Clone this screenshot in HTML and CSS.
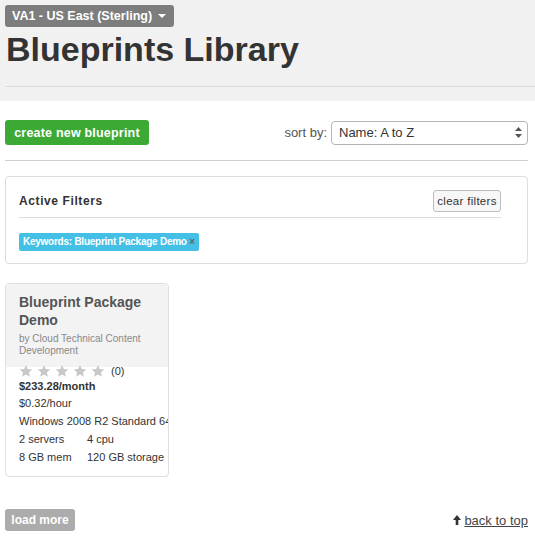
FILE: index.html
```html
<!DOCTYPE html>
<html>
<head>
<meta charset="utf-8">
<link rel="stylesheet" href="styles.css">
</head>
<body>
<header class="head">
  <div class="region">VA1 - US East (Sterling) <span class="caret"></span></div>
  <h1 class="title">Blueprints Library</h1>
  <div class="head-rule"></div>
</header>
<main class="page">
  <div class="toolbar">
    <button class="btn-create">create new blueprint</button>
    <label class="sort">sort by:
      <span class="select">Name: A to Z
        <svg class="updown" width="7" height="11" viewBox="0 0 7 11"><path d="M3.5 0 L7 4 H0 Z M3.5 11 L7 7 H0 Z" fill="#555"/></svg>
      </span>
    </label>
  </div>
  <div class="rule"></div>
  <section class="filters">
    <div class="filters-head">
      <h2 class="filters-title">Active Filters</h2>
      <button class="btn-clear">clear filters</button>
    </div>
    <div class="filters-body">
      <span class="tag">Keywords: Blueprint Package Demo <span class="tag-x">×</span></span>
    </div>
  </section>
  <div class="cards">
    <article class="card">
      <div class="card-top">
        <h3 class="card-title">Blueprint Package Demo</h3>
        <div class="card-by">by Cloud Technical Content Development</div>
      </div>
      <div class="card-body">
        <div class="stars">
          <svg class="star" viewBox="0 0 24 24"><path d="M12 1.5l3.1 7.1 7.7.7-5.8 5.1 1.7 7.6L12 18l-6.7 4 1.7-7.6-5.8-5.1 7.7-.7z"/></svg>
          <svg class="star" viewBox="0 0 24 24"><path d="M12 1.5l3.1 7.1 7.7.7-5.8 5.1 1.7 7.6L12 18l-6.7 4 1.7-7.6-5.8-5.1 7.7-.7z"/></svg>
          <svg class="star" viewBox="0 0 24 24"><path d="M12 1.5l3.1 7.1 7.7.7-5.8 5.1 1.7 7.6L12 18l-6.7 4 1.7-7.6-5.8-5.1 7.7-.7z"/></svg>
          <svg class="star" viewBox="0 0 24 24"><path d="M12 1.5l3.1 7.1 7.7.7-5.8 5.1 1.7 7.6L12 18l-6.7 4 1.7-7.6-5.8-5.1 7.7-.7z"/></svg>
          <svg class="star" viewBox="0 0 24 24"><path d="M12 1.5l3.1 7.1 7.7.7-5.8 5.1 1.7 7.6L12 18l-6.7 4 1.7-7.6-5.8-5.1 7.7-.7z"/></svg>
          <em>(0)</em>
        </div>
        <div class="price">$233.28/month</div>
        <div class="line">$0.32/hour</div>
        <div class="line nowrap">Windows 2008 R2 Standard 64-bit</div>
        <div class="line pair"><span>2 servers</span><span>4 cpu</span></div>
        <div class="line pair"><span>8 GB mem</span><span>120 GB storage</span></div>
      </div>
    </article>
  </div>
  <div class="footer">
    <button class="btn-more">load more</button>
    <a class="top" href="#"><svg width="8" height="10" viewBox="0 0 8 10"><path d="M4 0 L8 5 H5.3 V10 H2.7 V5 H0 Z" fill="#333"/></svg> <u>back to top</u></a>
  </div>
</main>
</body>
</html>
```
FILE: styles.css
```css
* { box-sizing: border-box; }
body {
  margin: 0;
  font-family: "Liberation Sans", Arial, sans-serif;
  color: #333;
  background: #fff;
}
.head {
  background: #f1f1f1;
  padding: 5px 0 0 5px;
  height: 101px;
}
.region {
  display: inline-flex;
  align-items: center;
  gap: 6px;
  height: 22px;
  padding: 0 8px 0 7px;
  background: #7d7d7d;
  color: #fff;
  font-weight: bold;
  font-size: 12.5px;
  white-space: nowrap;
  border-radius: 3px;
}
.caret {
  width: 0; height: 0;
  border-left: 4px solid transparent;
  border-right: 4px solid transparent;
  border-top: 4px solid #fff;
}
.title {
  margin: 3px 0 0 1px;
  font-size: 34px;
  line-height: 38px;
  font-weight: bold;
  color: #333;
}
.head-rule {
  margin-top: 18px;
  border-top: 1px solid #dcdcdc;
}
.page {
  padding: 0 7px 0 5px;
}
.toolbar {
  display: flex;
  justify-content: space-between;
  align-items: center;
  margin-top: 19px;
  height: 25px;
}
.btn-create {
  height: 25px;
  padding: 0 8px;
  width: 144px;
  border: none;
  border-radius: 3px;
  background: #3ca935;
  color: #fff;
  font-family: inherit;
  font-weight: bold;
  font-size: 12.5px;
  letter-spacing: 0.2px;
}
.sort {
  display: flex;
  align-items: center;
  gap: 4px;
  font-size: 13px;
  color: #555;
}
.select {
  display: flex;
  align-items: center;
  justify-content: space-between;
  width: 197px;
  height: 24px;
  padding: 0 5px 0 7px;
  border: 1px solid #b5b5b5;
  border-radius: 4px;
  background: #fff;
  color: #333;
  font-size: 13px;
}
.rule {
  margin-top: 15px;
  border-top: 1px solid #cfcfcf;
}
.filters {
  margin-top: 15px;
  border: 1px solid #dedede;
  border-radius: 4px;
  padding: 13px 26px 13px 13px;
  height: 88px;
}
.filters-head {
  display: flex;
  justify-content: space-between;
  align-items: center;
  padding-bottom: 5px;
  border-bottom: 1px solid #dcdcdc;
}
.filters-title {
  margin: 0;
  font-size: 12px;
  font-weight: bold;
  letter-spacing: 0.6px;
  color: #333;
}
.btn-clear {
  height: 22px;
  width: 68px;
  padding: 0;
  border: 1px solid #bdbdbd;
  border-radius: 3px;
  background: #f7f7f7;
  font-family: inherit;
  font-size: 11.5px;
  letter-spacing: 0.3px;
  color: #333;
}
.filters-body {
  padding-top: 13px;
}
.tag {
  display: inline-block;
  height: 18px;
  line-height: 18px;
  padding: 0 4px 0 4px;
  background: #44c0e6;
  border-radius: 2px;
  color: #fff;
  font-weight: bold;
  font-size: 10px;
  letter-spacing: -0.25px;
  white-space: nowrap;
}
.tag-x { color: #666; }
.cards {
  margin-top: 19px;
  display: flex;
}
.card {
  width: 164px;
  height: 194px;
  border: 1px solid #e0e0e0;
  border-radius: 4px;
  overflow: hidden;
}
.card-top {
  background: #f3f3f3;
  padding: 9px 13px 8px 13px;
  height: 83px;
}
.card-title {
  margin: 0;
  font-size: 14px;
  line-height: 18px;
  font-weight: bold;
  color: #555;
}
.card-by {
  margin-top: 4px;
  font-size: 10px;
  line-height: 12px;
  color: #888;
}
.card-body {
  padding: 0 0 0 13px;
  font-size: 11px;
  color: #333;
}
.stars {
  margin-top: -3px;
  display: flex;
  align-items: center;
  gap: 4px;
  height: 14px;
}
.star {
  width: 14px;
  height: 14px;
  fill: #c8c8c8;
}
.stars em {
  font-style: normal;
  font-size: 11px;
  color: #333;
  margin-left: 2px;
}
.price {
  font-weight: bold;
  line-height: 16px;
  margin-top: 0;
}
.line {
  line-height: 18px;
}
.nowrap { white-space: nowrap; }
.pair span:first-child {
  display: inline-block;
  width: 68px;
}
.footer {
  display: flex;
  justify-content: space-between;
  align-items: center;
  margin-top: 32px;
}
.btn-more {
  height: 22px;
  width: 70px;
  padding: 0;
  border: none;
  border-radius: 3px;
  background: #acacac;
  color: #fff;
  font-family: inherit;
  font-weight: bold;
  font-size: 12px;
}
.top {
  color: #444;
  font-size: 13px;
  text-decoration: none;
}
```
